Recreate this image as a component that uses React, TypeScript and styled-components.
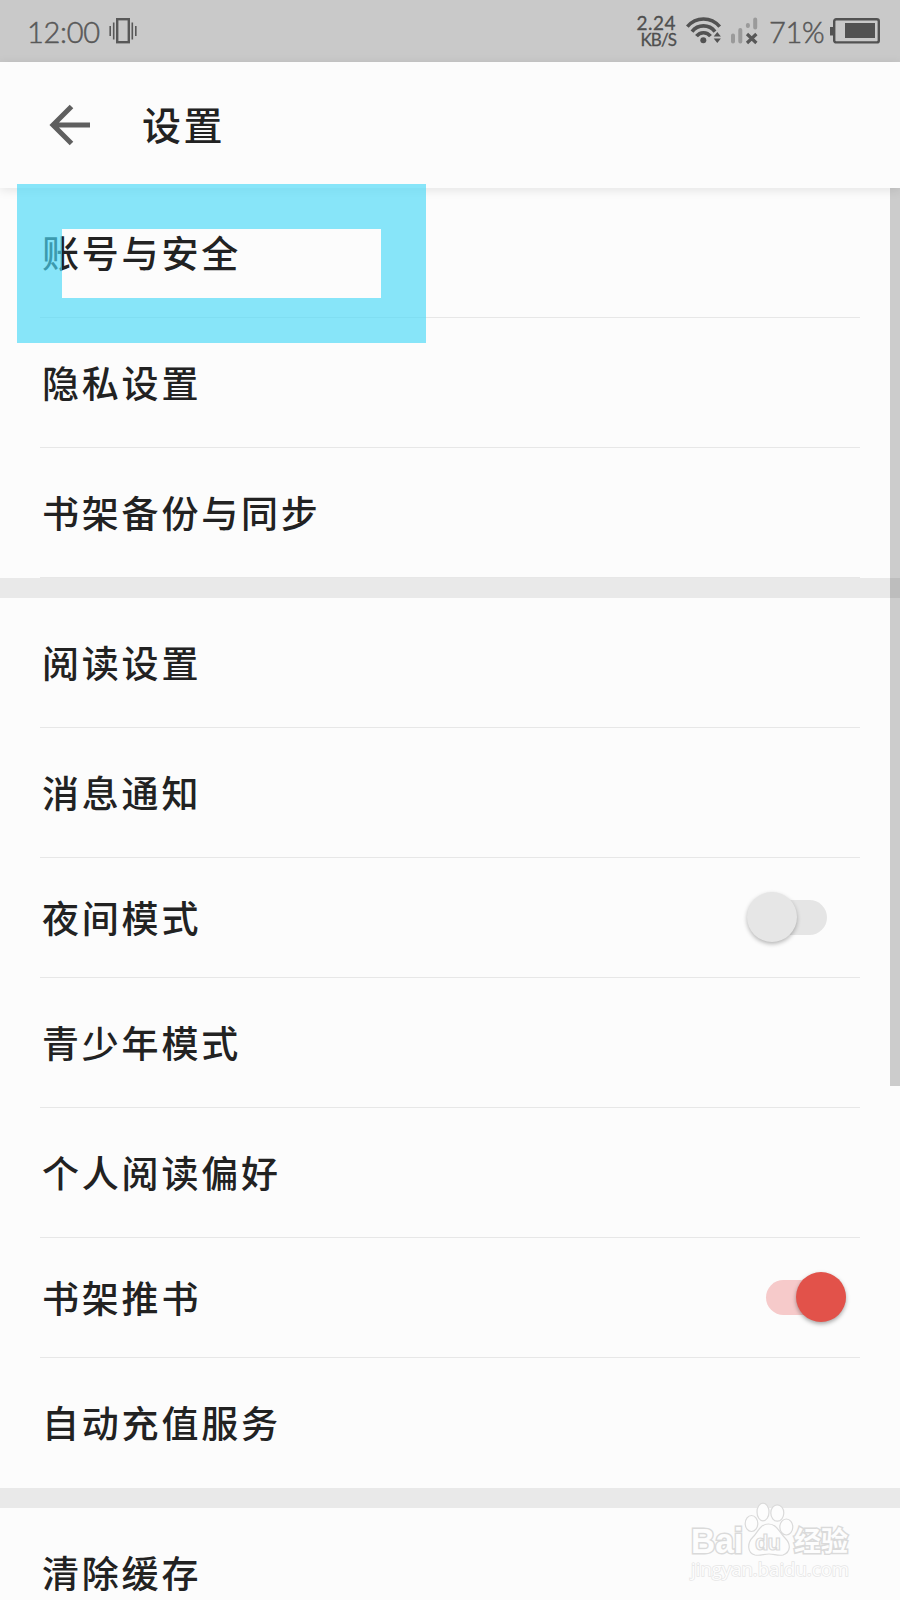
import React from "react";
import styled, { createGlobalStyle } from "styled-components";

const GlobalStyle = createGlobalStyle`
  * { box-sizing: border-box; }
  body {
    margin: 0;
    background: #fcfcfc;
    font-family: "Noto Sans CJK SC", sans-serif;
    color: #222;
  }
`;

const Screen = styled.div`
  position: relative;
  width: 900px;
  height: 1600px;
  overflow: hidden;
  background: #fcfcfc;
  display: flex;
  flex-direction: column;
`;

const StatusBar = styled.div`
  flex: none;
  height: 62px;
  padding: 0 20px 0 27px;
  background: #c9c9c9;
  color: #585858;
  display: flex;
  align-items: center;
  justify-content: space-between;
  font-family: Lato, sans-serif;
`;

const StatusGroup = styled.div`
  display: flex;
  align-items: center;
  svg { display: block; flex: none; }
`;

const SignalSlot = styled(StatusGroup)`
  margin: 0 11px 0 8px;
`;

const StatusText = styled.span<{ $width: number }>`
  width: ${(p) => p.$width}px;
  font-size: 29px;
  font-weight: 300;
  line-height: 62px;
  padding-top: 2px;
  letter-spacing: -0.3px;
  white-space: nowrap;
  -webkit-text-stroke: 0.5px #585858;
`;

const NetSpeed = styled.div`
  width: 42px;
  margin-right: 10px;
  display: flex;
  flex-direction: column;
  align-items: flex-end;
  color: #4f4f4f;
  -webkit-text-stroke: 0.3px #4f4f4f;
`;

const SpeedValue = styled.span`
  font-size: 19px;
  line-height: 17px;
  letter-spacing: 0.5px;
`;

const SpeedUnit = styled.span`
  font-size: 17px;
  line-height: 17px;
  letter-spacing: -0.9px;
`;

const Header = styled.header`
  position: relative;
  z-index: 1;
  flex: none;
  height: 126px;
  padding: 0 0 1px 49px;
  background: #fcfcfc;
  box-shadow: 0 2px 10px rgba(0, 0, 0, 0.1);
  display: flex;
  align-items: center;
  svg { display: block; }
`;

const Title = styled.h1`
  margin: 0 0 0 51px;
  padding-bottom: 4px;
  font-size: 39px;
  line-height: 60px;
  font-weight: 500;
  letter-spacing: 2.5px;
`;

const Group = styled.section`
  flex: none;
  border-bottom: 20px solid #e9e9e9;
`;

const Row = styled.div<{ $toggle?: boolean }>`
  height: ${(p) => (p.$toggle ? 120 : 130)}px;
  margin: 0 40px;
  display: flex;
  align-items: center;
  justify-content: space-between;
  border-bottom: 1px solid #e7e7e7;
`;

const PlainRow = styled(Row)`
  border-bottom-color: transparent;
`;

const Label = styled.span`
  padding-bottom: 2px;
  margin-left: 2px;
  font-size: 37px;
  line-height: 56px;
  font-weight: 500;
  letter-spacing: 2.8px;
`;

const Switch = styled.div<{ $on?: boolean }>`
  width: 80px;
  height: 35px;
  margin: 0 ${(p) => (p.$on ? 14 : 33)}px 1px 0;
  display: flex;
  align-items: center;
  justify-content: ${(p) => (p.$on ? "flex-end" : "flex-start")};
  border-radius: 18px;
  background: ${(p) =>
    p.$on ? "#f6caca" : "linear-gradient(90deg, transparent 20px, #e5e5e5 20px)"};
`;

const Thumb = styled.div<{ $on?: boolean }>`
  flex: none;
  width: 50px;
  height: 50px;
  border-radius: 50%;
  background: ${(p) => (p.$on ? "#e2524a" : "#e6e6e6")};
  box-shadow: 0 2px 4px rgba(0, 0, 0, ${(p) => (p.$on ? 0.34 : 0.28)});
`;

const Scrollbar = styled.div`
  position: absolute;
  right: 0;
  top: 187px;
  width: 10px;
  height: 899px;
  background: rgba(0, 0, 0, 0.19);
`;

const Highlight = styled.div`
  position: absolute;
  z-index: 2;
  left: 17px;
  top: 184px;
  width: 409px;
  height: 159px;
  border: 45px solid rgba(74, 217, 247, 0.66);
`;

const Watermark = styled.svg`
  position: absolute;
  left: 680px;
  top: 1495px;
`;

const VibrateIcon = () => (
  <svg width="28" height="26" viewBox="0 0 28 26" fill="none" stroke="#585858">
    <rect x="8.2" y="1.2" width="11.6" height="23" strokeWidth="2.4" />
    <path d="M4.7 4.5v17M23.3 4.5v17" strokeWidth="1.6" />
    <path d="M1.2 8v10M26.8 8v10" strokeWidth="1.6" />
  </svg>
);

const WifiIcon = () => (
  <svg width="36" height="28" viewBox="0 0 36 28" fill="none" stroke="#525252" strokeWidth="3.6">
    <path d="M1.3 9.7C10-.5 25-.5 33.7 9.7" />
    <path d="M6 14.6C12 7 23 7 29 14.6" />
    <path d="M10.5 19.2C14 14.5 21 14.5 24.5 19.2" />
    <circle cx="17.3" cy="23.2" r="3" fill="#525252" stroke="none" />
    <path d="M31.3 15l3.6 4.6h-7.2zM31.3 26l3.6-4.6h-7.2z" fill="#525252" stroke="none" />
  </svg>
);

const SignalIcon = () => (
  <svg width="28" height="28" viewBox="0 0 28 28" fill="none" strokeLinecap="round">
    <path d="M3 18.5v6M10.3 13v11.5M17.9 8v1M25.2 2.5v8" stroke="#9a9a9a" strokeWidth="4" />
    <path d="M17 17l9.400 9M26.400 17l-9.400 9" stroke="#585858" strokeWidth="3.2" strokeLinecap="butt" />
  </svg>
);

const BatteryIcon = () => (
  <svg width="50" height="26" viewBox="0 0 50 26">
    <rect x="4.2" y="1.2" width="44.600" height="23.2" rx="2" fill="none" stroke="#525252" strokeWidth="2.4" />
    <path d="M0 9h3.500v8.500h-3.500z" fill="#525252" />
    <rect x="15" y="5" width="30" height="15" fill="#525252" />
  </svg>
);

const BackIcon = () => (
  <svg width="42" height="42" viewBox="0 0 42 42" fill="none" stroke="#5f5f5f" strokeWidth="5">
    <path d="M22.500 2.500L4 21l18.500 18.500M4 21h37" />
  </svg>
);

type Item = { label: string; toggle?: "on" | "off"; last?: boolean };

const groups: Item[][] = [
  [{ label: "账号与安全" }, { label: "隐私设置" }, { label: "书架备份与同步" }],
  [
    { label: "阅读设置" },
    { label: "消息通知" },
    { label: "夜间模式", toggle: "off" },
    { label: "青少年模式" },
    { label: "个人阅读偏好" },
    { label: "书架推书", toggle: "on" },
    { label: "自动充值服务", last: true },
  ],
  [{ label: "清除缓存" }],
];

const SettingRow = ({ label, toggle, last }: Item) => {
  const Container = last ? PlainRow : Row;
  return (
    <Container $toggle={!!toggle}>
      <Label>{label}</Label>
      {toggle && (
        <Switch $on={toggle === "on"}>
          <Thumb $on={toggle === "on"} />
        </Switch>
      )}
    </Container>
  );
};

export default function App() {
  return (
    <Screen>
      <GlobalStyle />
      <StatusBar>
        <StatusGroup>
          <StatusText $width={82}>12:00</StatusText>
          <VibrateIcon />
        </StatusGroup>
        <StatusGroup>
          <NetSpeed>
            <SpeedValue>2.24</SpeedValue>
            <SpeedUnit>KB/S</SpeedUnit>
          </NetSpeed>
          <WifiIcon />
          <SignalSlot>
            <SignalIcon />
          </SignalSlot>
          <StatusText $width={61}>71%</StatusText>
          <BatteryIcon />
        </StatusGroup>
      </StatusBar>
      <Header>
        <BackIcon />
        <Title>设置</Title>
      </Header>
      {groups.map((items, i) => (
        <Group key={i}>
          {items.map((item) => (
            <SettingRow key={item.label} {...item} />
          ))}
        </Group>
      ))}
      <Scrollbar />
      <Highlight />
      <Watermark width="190" height="100" viewBox="0 0 190 100">
        <g fill="#fdfdfd" stroke="#dadada" strokeWidth="1.2">
          <g strokeWidth="3" fontWeight="700" paintOrder="stroke">
            <text x="11" y="58" fontSize="35" fontFamily="Liberation Sans, sans-serif" textLength="52" lengthAdjust="spacingAndGlyphs">Bai</text>
            <text x="114" y="56" fontSize="27" fontFamily="Noto Sans CJK SC, sans-serif" textLength="54">经验</text>
          </g>
          <ellipse cx="71.500" cy="28.500" rx="6.300" ry="8" />
          <ellipse cx="83" cy="17" rx="6" ry="8.800" />
          <ellipse cx="97.300" cy="18" rx="6.500" ry="8.200" />
          <ellipse cx="106.300" cy="32" rx="6.500" ry="8" />
          <path d="M88.500 29C80 29 78 37 73 42C67 48 67 58 75 60C80 61 84 59 89 59C94 59 98 61 103 60C111 57 111 49 105 43C99 37 97 29 88.500 29Z" />
          <text x="75" y="55" fontSize="22" fontWeight="700" fontFamily="Liberation Sans, sans-serif" textLength="26" strokeWidth="1.2">du</text>
          <text x="11" y="81" fontSize="18.500" fontFamily="Open Sans, sans-serif" textLength="158" lengthAdjust="spacingAndGlyphs" strokeWidth="1.500" stroke="#e6e6e6" paintOrder="stroke">jingyan.baidu.com</text>
        </g>
      </Watermark>
    </Screen>
  );
}
